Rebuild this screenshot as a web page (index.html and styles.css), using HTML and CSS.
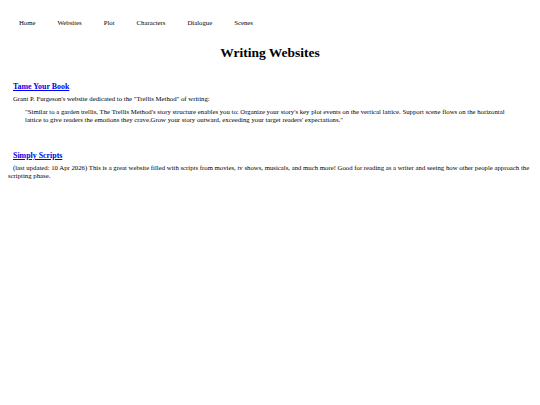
FILE: index.html
```html
<!DOCTYPE html>
<html>
<head>
<meta charset="utf-8">
<link rel="stylesheet" href="styles.css">
</head>
<body>
<nav class="nav">
  <a class="nav-item">Home</a>
  <a class="nav-item">Websites</a>
  <a class="nav-item">Plot</a>
  <a class="nav-item">Characters</a>
  <a class="nav-item">Dialogue</a>
  <a class="nav-item">Scenes</a>
</nav>
<h1 class="title">Writing Websites</h1>
<section class="site">
  <h2 class="site-name"><a href="#">Tame Your Book</a></h2>
  <p class="site-desc">Grant P. Furgeson's website dedicated to the "Trellis Method" of writing:</p>
  <blockquote class="quote">"Similar to a garden trellis, The Trellis Method's story structure enables you to: Organize your story's key plot events on the vertical lattice. Support scene flows on the horizontal lattice to give readers the emotions they crave.Grow your story outward, exceeding your target readers' expectations."</blockquote>
</section>
<section class="site site-second">
  <h2 class="site-name"><a href="#">Simply Scripts</a></h2>
  <p class="site-desc2">(last updated: 10 Apr 2026) This is a great website filled with scripts from movies, tv shows, musicals, and much more! Good for reading as a writer and seeing how other people approach the scripting phase.</p>
</section>
</body>
</html>
```

FILE: styles.css
```css
html, body {
  background: #ffffff;
}
body {
  margin: 8px;
  font-family: "Liberation Serif", "Times New Roman", serif;
  font-size: 6.75px;
  line-height: 8px;
  color: #000000;
}
.nav {
  display: flex;
  padding-top: 11px;
}
.nav-item {
  padding: 0 11px;
  color: #000000;
}
.title {
  text-align: center;
  font-size: 13.5px;
  line-height: 16px;
  margin: 18px 0 0 0;
}
.site {
  padding-left: 5px;
}
.site-name {
  font-size: 7.9px;
  line-height: 10px;
  margin: 21px 0 0 0;
}
.site-name a {
  color: #0000ee;
  text-decoration: underline;
}
.site-desc {
  margin: 3px 0 0 0;
}
.quote {
  margin: 5px 25px 0 12px;
}
.site-second {
  padding-left: 0;
  margin-top: 27px;
}
.site-second .site-name {
  padding-left: 5px;
}
.site-desc2 {
  margin: 3px 0 0 0;
  text-indent: 5px;
}
```
